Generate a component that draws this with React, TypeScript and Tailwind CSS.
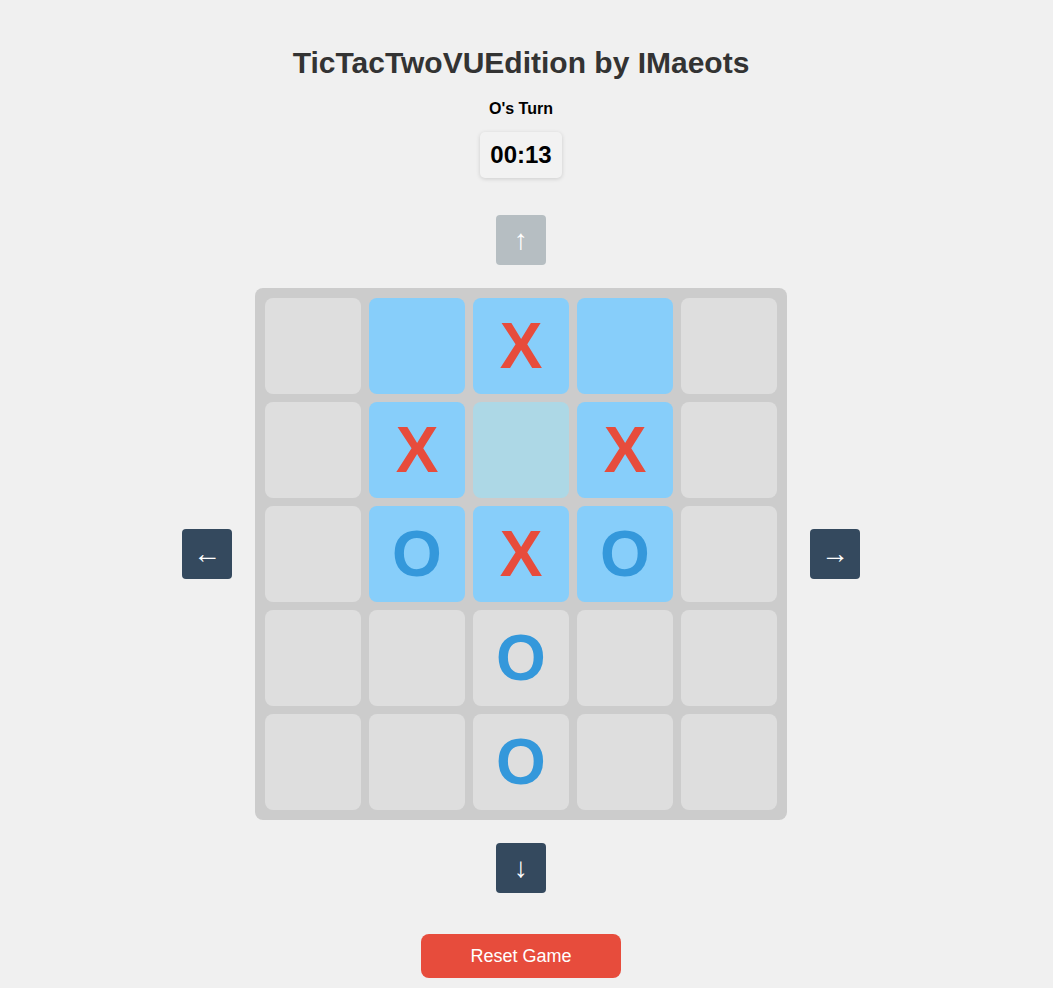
import { useState } from "react";

type Cell = "X" | "O" | "";

const initial: Cell[] = [
  "", "", "X", "", "",
  "", "X", "", "X", "",
  "", "O", "X", "O", "",
  "", "", "O", "", "",
  "", "", "O", "", "",
];

// active 3x3 window: rows 0-2, cols 1-3
const inWindow = (i: number) => {
  const r = Math.floor(i / 5);
  const c = i % 5;
  return r >= 0 && r <= 2 && c >= 1 && c <= 3;
};

const ArrowBtn = ({
  label,
  disabled,
}: {
  label: string;
  disabled?: boolean;
}) => (
  <button
    className={
      disabled
        ? "w-[50px] h-[50px] rounded-[4px] bg-[#b6bec2] text-white text-[28px] leading-none flex items-center justify-center"
        : "w-[50px] h-[50px] rounded-[4px] bg-[#34495e] text-white text-[28px] leading-none flex items-center justify-center"
    }
  >
    {label}
  </button>
);

const App = () => {
  const [board] = useState<Cell[]>(initial);

  return (
    <div className="min-h-[988px] w-full bg-[#f0f0f0]">
      <div
        className="w-[1042px] flex flex-col items-center pt-[45px]"
        style={{ fontFamily: '"Liberation Sans", Arial, sans-serif' }}
      >
        <h1 className="text-[30px] font-bold text-[#333] leading-[36px]">
          TicTacTwoVUEdition by IMaeots
        </h1>
        <p className="mt-[19px] text-[16px] font-bold text-black leading-[18px]">
          O's Turn
        </p>
        <div className="mt-[14px] px-[10px] py-[9px] rounded-[5px] bg-[#f2f2f2] shadow-[0_1px_4px_rgba(0,0,0,0.15)] text-[24px] font-bold text-black leading-[28px]">
          00:13
        </div>

        <div className="mt-[37px]">
          <ArrowBtn label="↑" disabled />
        </div>

        <div className="mt-[23px] flex items-center gap-[23px]">
          <ArrowBtn label="←" />
          <div className="bg-[#cccccc] rounded-[8px] p-[10px] grid grid-cols-5 gap-[8px]">
            {board.map((cell, i) => {
              const center = i === 7;
              const bg = center
                ? "bg-[#add8e6]"
                : inWindow(i)
                ? "bg-[#87cefa]"
                : "bg-[#dedede]";
              return (
                <div
                  key={i}
                  className={`w-[96px] h-[96px] rounded-[8px] flex items-center justify-center ${bg}`}
                >
                  {cell && (
                    <span
                      className={
                        cell === "X"
                          ? "text-[64px] font-bold text-[#e74c3c] leading-none"
                          : "text-[64px] font-bold text-[#3498db] leading-none"
                      }
                    >
                      {cell}
                    </span>
                  )}
                </div>
              );
            })}
          </div>
          <ArrowBtn label="→" />
        </div>

        <div className="mt-[23px]">
          <ArrowBtn label="↓" />
        </div>

        <button className="mt-[41px] w-[200px] h-[44px] rounded-[8px] bg-[#e74c3c] text-white text-[18px]">
          Reset Game
        </button>
      </div>
    </div>
  );
};

export default App;
